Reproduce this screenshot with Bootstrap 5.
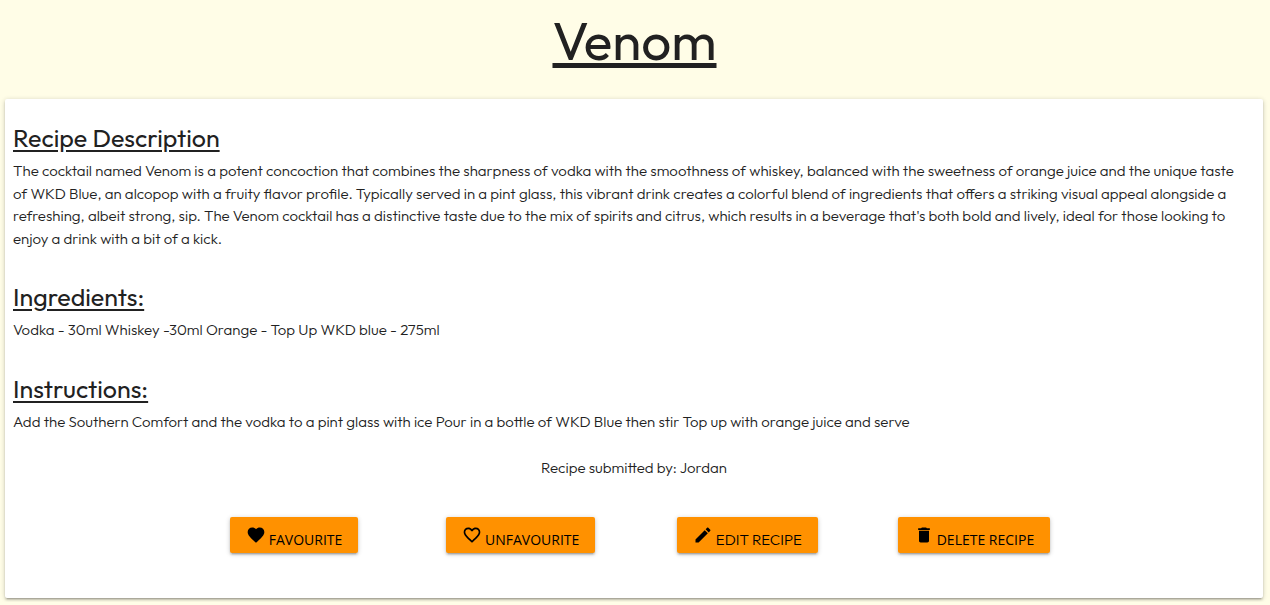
<!DOCTYPE html>
<html lang="en">
<head>
<meta charset="utf-8">
<meta name="viewport" content="width=device-width, initial-scale=1">
<title>Venom</title>
<link rel="stylesheet" href="https://cdn.jsdelivr.net/npm/bootstrap@5.3.0/dist/css/bootstrap.min.css">
<style>
  body { background: #fffde7; color: #212121; font-family: Outfit, Lato, sans-serif; font-size: 15px; font-weight: 300; line-height: 1.5; }
  h1 { margin: 11px 1px 0 0; font-size: 53px; font-weight: 400; line-height: 60px; text-decoration-thickness: 5px; text-underline-offset: 3px; text-decoration-skip-ink: none; }
  h2 { margin: 0 0 9px; font-size: 25px; font-weight: 400; line-height: 26px; text-decoration-thickness: 2px; text-underline-offset: 3px; }
  .recipe-card { margin: 28px 7px 0 5px; padding: 26px 16px 45px 8px; border-radius: 2px; color: #212121;
    box-shadow: 0 2px 2px 0 rgba(0,0,0,.14), 0 3px 1px -2px rgba(0,0,0,.12), 0 1px 5px 0 rgba(0,0,0,.2); }
  .recipe-part { margin-bottom: 34px; }
  .recipe-part:last-of-type { margin-bottom: 24px; }
  .recipe-footer { margin-right: -8px; }
  .recipe-actions { width: 73%; padding-top: 37px; }
  .recipe-btn { height: 36px; gap: 3px; padding: 0 16px; border: 0; border-radius: 2px; background: #ff9100; color: #000;
    font-family: "Open Sans", sans-serif; font-size: 14px; font-weight: 400; line-height: 36px; text-transform: uppercase;
    box-shadow: 0 2px 2px 0 rgba(0,0,0,.14), 0 3px 1px -2px rgba(0,0,0,.12), 0 1px 5px 0 rgba(0,0,0,.2); }
  .recipe-btn:hover { background: #ffa22b; color: #000; }
  .recipe-btn svg { width: 20px; height: 20px; fill: currentColor; }
  .recipe-btn span { padding-top: 10px; }
  .btn-edit { font-family: Outfit, Lato, sans-serif; font-size: 15px; font-weight: 300; }
</style>
<script src="https://cdn.jsdelivr.net/npm/bootstrap@5.3.0/dist/js/bootstrap.bundle.min.js" defer></script>
</head>
<body>
<main class="overflow-hidden pb-1">
  <h1 class="text-center text-decoration-underline">Venom</h1>
  <article class="card border-0 recipe-card">
    <section class="recipe-part">
      <h2 class="text-decoration-underline">Recipe Description</h2>
      <p class="mb-0">The cocktail named Venom is a potent concoction that combines the sharpness of vodka with the smoothness of whiskey, balanced with the sweetness of orange juice and the unique taste of WKD Blue, an alcopop with a fruity flavor profile. Typically served in a pint glass, this vibrant drink creates a colorful blend of ingredients that offers a striking visual appeal alongside a refreshing, albeit strong, sip. The Venom cocktail has a distinctive taste due to the mix of spirits and citrus, which results in a beverage that's both bold and lively, ideal for those looking to enjoy a drink with a bit of a kick.</p>
    </section>
    <section class="recipe-part">
      <h2 class="text-decoration-underline">Ingredients:</h2>
      <p class="mb-0">Vodka - 30ml Whiskey -30ml Orange - Top Up WKD blue - 275ml</p>
    </section>
    <section class="recipe-part">
      <h2 class="text-decoration-underline">Instructions:</h2>
      <p class="mb-0">Add the Southern Comfort and the vodka to a pint glass with ice Pour in a bottle of WKD Blue then stir Top up with orange juice and serve</p>
    </section>
    <footer class="recipe-footer text-center">
      <p class="mb-0">Recipe submitted by: Jordan</p>
      <div class="row g-0 mx-auto recipe-actions">
        <div class="col-3"><button type="button" class="btn recipe-btn d-inline-flex align-items-center"><svg viewBox="0 0 24 24" aria-hidden="true"><path d="M12 21.35l-1.45-1.32C5.4 15.36 2 12.28 2 8.5 2 5.42 4.42 3 7.5 3c1.74 0 3.41.81 4.5 2.09C13.09 3.81 14.76 3 16.5 3 19.58 3 22 5.42 22 8.5c0 3.78-3.4 6.86-8.55 11.54L12 21.35z"/></svg><span>Favourite</span></button></div>
        <div class="col-3"><button type="button" class="btn recipe-btn d-inline-flex align-items-center"><svg viewBox="0 0 24 24" aria-hidden="true"><path d="M16.5 3c-1.74 0-3.41.81-4.5 2.09C10.91 3.81 9.24 3 7.5 3 4.42 3 2 5.42 2 8.5c0 3.78 3.4 6.86 8.55 11.54L12 21.35l1.45-1.32C18.6 15.36 22 12.28 22 8.5 22 5.42 19.58 3 16.5 3zm-4.4 15.55l-.1.1-.1-.1C7.14 14.24 4 11.39 4 8.5 4 6.5 5.5 5 7.5 5c1.54 0 3.04.99 3.57 2.36h1.87C13.46 5.99 14.96 5 16.5 5c2 0 3.5 1.5 3.5 3.5 0 2.89-3.14 5.74-7.9 10.05z"/></svg><span>Unfavourite</span></button></div>
        <div class="col-3"><button type="button" class="btn recipe-btn btn-edit d-inline-flex align-items-center"><svg viewBox="0 0 24 24" aria-hidden="true"><path d="M3 17.25V21h3.75L17.81 9.94l-3.75-3.75L3 17.25zM20.71 7.04c.39-.39.39-1.02 0-1.41l-2.34-2.34c-.39-.39-1.02-.39-1.41 0l-1.83 1.83 3.75 3.75 1.83-1.83z"/></svg><span>Edit Recipe</span></button></div>
        <div class="col-3"><button type="button" class="btn recipe-btn d-inline-flex align-items-center"><svg viewBox="0 0 24 24" aria-hidden="true"><path d="M6 19c0 1.1.9 2 2 2h8c1.1 0 2-.9 2-2V7H6v12zM19 4h-3.5l-1-1h-5l-1 1H5v2h14V4z"/></svg><span>Delete Recipe</span></button></div>
      </div>
    </footer>
  </article>
</main>
</body>
</html>
